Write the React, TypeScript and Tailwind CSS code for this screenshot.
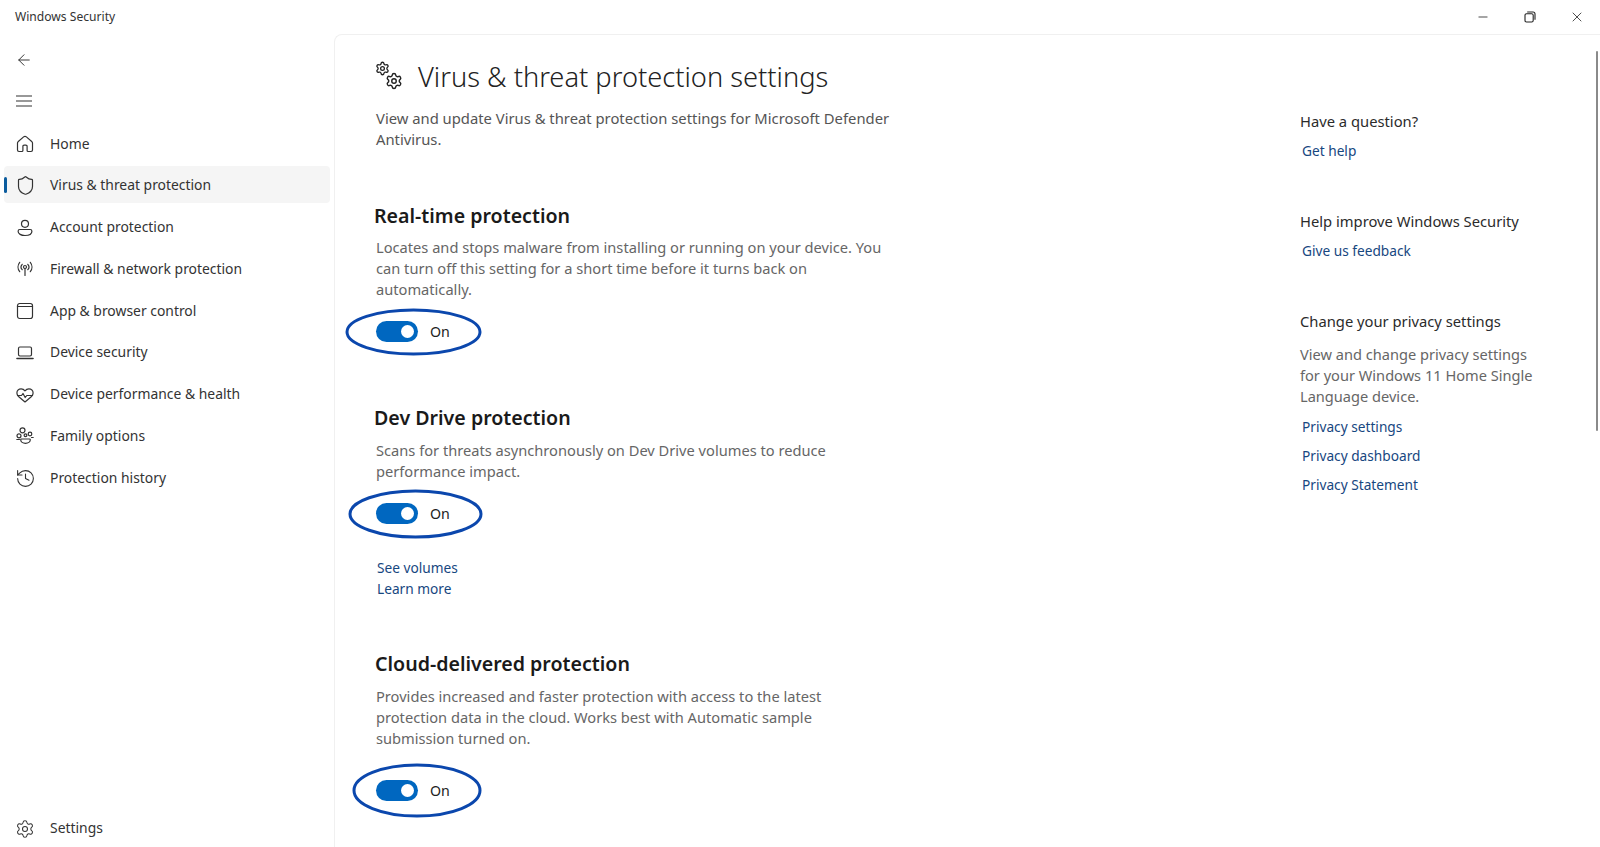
import React from "react";
import { ArrowLeft, Shield, History, Settings, Minus, X } from "lucide-react";

const I = ({ children }: { children: React.ReactNode }) => (
  <svg viewBox="0 0 20 20" width="20" height="20" fill="none" stroke="#333333" strokeWidth="1.2" strokeLinecap="round" strokeLinejoin="round">
    {children}
  </svg>
);

const HomeIcon = () => (
  <I>
    <path d="M8.600 2.900a2.100 2.100 0 0 1 2.800 0l5.300 4.600c.5.4.8 1 .8 1.600v7a1.400 1.400 0 0 1-1.400 1.400h-3a1 1 0 0 1-1-1v-4.200a1.200 1.200 0 0 0-1.200-1.200H9.100a1.200 1.200 0 0 0-1.200 1.200v4.200a1 1 0 0 1-1 1h-3a1.400 1.400 0 0 1-1.400-1.400v-7c0-.6.3-1.200.8-1.600z" />
  </I>
);
const ShieldIcon = () => <Shield size={21} strokeWidth={1.35} color="#333333" />;
const AccountIcon = () => (
  <I>
    <circle cx="10" cy="5.800" r="3.500" />
    <path d="M4.800 11.500h10.400a1.700 1.700 0 0 1 1.700 1.700c0 2.700-3 4.300-6.900 4.300s-6.900-1.600-6.900-4.300a1.700 1.700 0 0 1 1.700-1.700z" />
  </I>
);
const FirewallIcon = () => (
  <I>
    <circle cx="10" cy="8" r="1.500" />
    <path d="M10 9.500V16.500M7.200 5.300a4 4 0 0 0 0 5.400M12.800 5.300a4 4 0 0 1 0 5.400M4.700 3.300a7.500 7.500 0 0 0 0 9.400M15.300 3.300a7.500 7.500 0 0 1 0 9.400" />
  </I>
);
const AppIcon = () => (
  <I>
    <rect x="2.500" y="2.500" width="15" height="15" rx="2.200" />
    <path d="M2.500 5.500h15" />
  </I>
);
const LaptopIcon = () => (
  <I>
    <rect x="3.500" y="4" width="13" height="9" rx="1.400" />
    <path d="M2 15.500h16" strokeWidth="1.600" />
  </I>
);
const HeartIcon = () => (
  <I>
    <path d="M3.500 11.500C2.400 10.400 1.900 9.300 1.900 8c0-2.400 1.900-4.200 4.200-4.200 1.500 0 2.900.7 3.900 2 1-1.300 2.400-2 3.900-2 2.300 0 4.200 1.800 4.200 4.200 0 1.300-.5 2.400-1.600 3.500L10 17z" />
    <path d="M2.500 10.500h4l1.500-2 2.200 4 1.600-2h5.700" />
  </I>
);
const FamilyIcon = () => (
  <I>
    <circle cx="7.500" cy="4.300" r="2.500" />
    <circle cx="15" cy="8" r="1.800" />
    <circle cx="10.500" cy="9.300" r="1.400" />
    <circle cx="4" cy="9.800" r="2" />
    <path d="M6.500 13h8a.8.800 0 0 1 .8.800c0 2-2.200 3.500-4.800 3.500s-4.800-1.500-4.800-3.500a.8.800 0 0 1 .8-.8z" />
    <path d="M1.800 13.500h2.700M16.500 11.500h1.700" />
  </I>
);
const HistoryIcon = () => <History size={21} strokeWidth={1.25} color="#333333" />;
const SettingsIcon = () => <Settings size={20} strokeWidth={1.25} color="#333333" />;

const navItems = [
  { label: "Home", icon: <HomeIcon /> },
  { label: "Virus & threat protection", icon: <ShieldIcon />, active: true },
  { label: "Account protection", icon: <AccountIcon /> },
  { label: "Firewall & network protection", icon: <FirewallIcon /> },
  { label: "App & browser control", icon: <AppIcon /> },
  { label: "Device security", icon: <LaptopIcon /> },
  { label: "Device performance & health", icon: <HeartIcon /> },
  { label: "Family options", icon: <FamilyIcon /> },
  { label: "Protection history", icon: <HistoryIcon /> },
];

const NavRow = ({ icon, label, active }: { icon: React.ReactNode; label: string; active?: boolean }) => (
  <div className={`relative flex h-[37px] w-[326px] items-center rounded-[4px] pt-[2px] ${active ? "bg-[#f5f5f5]" : ""}`}>
    {active && <span className="absolute left-0 top-[11px] h-[16px] w-[3px] rounded-full bg-[#0b5c9e]" />}
    <span className="ml-[11px] flex w-[35px] justify-start">{icon}</span>
    <span className="text-[13.900px] text-[#333333]">{label}</span>
  </div>
);

const Toggle = ({ ellipse }: { ellipse: React.ReactNode }) => (
  <div className="relative flex h-[21px] items-center">
    {ellipse}
    <span className="flex h-[21px] w-[42px] items-center justify-end rounded-full bg-[#0067c0] pr-[4px]">
      <span className="h-[13px] w-[13px] rounded-full bg-white" />
    </span>
    <span className="ml-[12px] text-[14.200px] leading-[21px] text-[#222222]">On</span>
  </div>
);

const Ring = ({ cls, w, h }: { cls: string; w: number; h: number }) => (
  <svg className={cls} width={w} height={h} viewBox={`0 0 ${w} ${h}`} fill="none">
    <ellipse cx={w / 2} cy={h / 2} rx={w / 2 - 2} ry={h / 2 - 2} stroke="#0b47ad" strokeWidth="3" />
  </svg>
);

const H = ({ cls, children }: { cls: string; children: React.ReactNode }) => (
  <h2 className={`text-[19.600px] font-semibold leading-[28px] text-[#1a1a1a] ${cls}`}>{children}</h2>
);
const Desc = ({ children }: { children: React.ReactNode }) => (
  <p className="mt-[7.500px] w-[510px] text-[14.650px] leading-[21px] text-[#666666]">{children}</p>
);
const A = ({ cls, children }: { cls?: string; children: React.ReactNode }) => (
  <a className={`block text-[13.700px] leading-[21px] text-[#17477f] ${cls ?? ""}`}>{children}</a>
);
const SideH = ({ cls, children }: { cls?: string; children: React.ReactNode }) => (
  <div className={`text-[14.750px] leading-[21px] text-[#2b2b2b] ${cls ?? ""}`}>{children}</div>
);

export default function App() {
  return (
    <div className="relative flex h-[847px] w-[1600px] flex-col overflow-hidden bg-white" style={{ fontFamily: '"Noto Sans", sans-serif' }}>
      <header className="flex h-[34px] shrink-0 items-center justify-between pl-[15px]">
        <span className="text-[12.100px] text-[#333333]">Windows Security</span>
        <div className="flex items-center text-[#222222]">
          <span className="flex w-[47px] justify-center"><Minus size={14} strokeWidth={1.4} /></span>
          <span className="flex w-[47px] justify-center">
            <svg width="12" height="12" viewBox="0 0 12 12" fill="none" stroke="#222222" strokeWidth="1.1">
              <rect x="1" y="2.800" width="8.200" height="8.200" rx="1.500" />
              <path d="M3.200 1h5.800A2 2 0 0 1 11 3v5.800" />
            </svg>
          </span>
          <span className="flex w-[47px] justify-center"><X size={16} strokeWidth={1.2} /></span>
        </div>
      </header>

      <div className="flex min-h-0 flex-1">
        <aside className="flex w-[334px] shrink-0 flex-col pb-[1px] pl-[4px]">
          <div className="flex flex-col gap-[4.750px] pt-[7px]">
            <div className="flex h-[37px] items-center pl-[11px]"><ArrowLeft size={18} strokeWidth={1.3} color="#333333" /></div>
            <div className="flex h-[37px] items-center pl-[11px]">
              <svg width="18" height="14" viewBox="0 0 18 14" stroke="#333333" strokeWidth="1.1"><path d="M1 2h16M1 7h16M1 12h16" /></svg>
            </div>
            {navItems.map((n) => <NavRow key={n.label} {...n} />)}
          </div>
          <div className="mt-auto"><NavRow icon={<SettingsIcon />} label="Settings" /></div>
        </aside>

        <main className="relative flex flex-1 rounded-tl-lg border-l border-t border-[#f0f0f0]">
          <div className="w-[965px] shrink-0 pl-[41px]">
            <div className="mt-[21.500px] flex h-[40px] items-center">
              <div className="relative h-[30px] w-[30px]">
                <Settings size={15} strokeWidth={2.1} color="#222222" className="absolute -left-[1px] -top-[1px]" />
                <Settings size={18} strokeWidth={1.9} color="#222222" className="absolute left-[9px] top-[10.500px]" />
              </div>
              <h1 className="ml-[12px] text-[27.250px] font-light leading-[40px] text-[#222222]">Virus &amp; threat protection settings</h1>
            </div>
            <p className="mt-[11px] w-[530px] text-[14.800px] leading-[21px] text-[#555555]">View and update Virus &amp; threat protection settings for Microsoft Defender Antivirus.</p>

            <H cls="-ml-[2px] mt-[52px]">Real-time protection</H>
            <Desc>Locates and stops malware from installing or running on your device. You can turn off this setting for a short time before it turns back on automatically.</Desc>
            <div className="mt-[21px]">
              <Toggle ellipse={<Ring cls="absolute -left-[31px] -top-[13px]" w={137} h={48} />} />
            </div>

            <H cls="-ml-[2px] mt-[62px]">Dev Drive protection</H>
            <Desc>Scans for threats asynchronously on Dev Drive volumes to reduce performance impact.</Desc>
            <div className="mt-[21px]">
              <Toggle ellipse={<Ring cls="absolute -left-[28px] -top-[14px]" w={135} h={50} />} />
            </div>
            <A cls="mt-[33px] ml-[1px]">See volumes</A>
            <A cls="ml-[1px]">Learn more</A>

            <H cls="-ml-[1px] mt-[51.500px]">Cloud-delivered protection</H>
            <Desc>Provides increased and faster protection with access to the latest protection data in the cloud. Works best with Automatic sample submission turned on.</Desc>
            <div className="mt-[31.500px]">
              <Toggle ellipse={<Ring cls="absolute -left-[24px] -top-[17px]" w={130} h={55} />} />
            </div>
          </div>

          <div className="pt-[75.500px]">
            <SideH>Have a question?</SideH>
            <A cls="mt-[8px] ml-[2px]">Get help</A>
            <SideH cls="mt-[50px]">Help improve Windows Security</SideH>
            <A cls="mt-[8px] ml-[2px]">Give us feedback</A>
            <SideH cls="mt-[50px]">Change your privacy settings</SideH>
            <p className="mt-[12px] w-[250px] text-[14.600px] leading-[21px] text-[#666666]">View and change privacy settings for your Windows 11 Home Single Language device.</p>
            <A cls="mt-[9px] ml-[2px]">Privacy settings</A>
            <A cls="mt-[8px] ml-[2px]">Privacy dashboard</A>
            <A cls="mt-[8px] ml-[2px]">Privacy Statement</A>
          </div>

          <span className="absolute right-[2px] top-[16px] h-[380px] w-[2px] rounded-full bg-[#8a8a8a]" />
        </main>
      </div>
    </div>
  );
}
